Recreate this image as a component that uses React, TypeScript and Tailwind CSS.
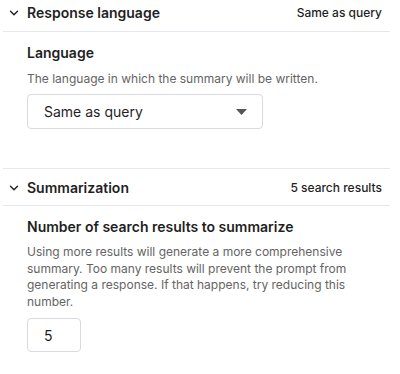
import { ChevronDown } from "lucide-react";

function SectionHeader({ title, value, className }: { title: string; value: string; className: string }) {
  return (
    <div className={`flex items-center justify-between border-b border-[#e6e6ee] pl-[4px] pr-[8px] ${className}`}>
      <div className="flex items-center gap-[6px]">
        <ChevronDown className="w-[14px] h-[14px] text-[#1f1f1f]" strokeWidth={2.4} />
        <span className="text-[14px] font-semibold text-[#1f1f1f]">{title}</span>
      </div>
      <span className="text-[12px] font-medium text-[#1f1f1f]">{value}</span>
    </div>
  );
}

export default function App() {
  return (
    <div className="w-[400px] h-[374px] bg-white overflow-hidden pl-[3px] pr-[10px] font-['Inter',sans-serif]">
      <SectionHeader title="Response language" value="Same as query" className="h-[32px] pb-[6px]" />

      <div className="pl-[24px] pt-[11px] pb-[39px]">
        <h3 className="text-[14px] font-semibold text-[#1f1f1f] leading-[20px]">Language</h3>
        <p className="mt-[7px] text-[12px] text-[#646464] leading-[18px]">
          The language in which the summary will be written.
        </p>
        <div className="mt-[6px] w-[236px] h-[35px] border border-[#d9d9e0] rounded-[4px] flex items-center justify-between pl-[16px] pr-[15px]">
          <span className="text-[14px] text-[#1f1f1f]">Same as query</span>
          <svg width="11" height="6" viewBox="0 0 11 6">
            <path d="M0 0 H11 L5.5 6 Z" fill="#555555" />
          </svg>
        </div>
      </div>

      <div className="border-t border-[#e6e6ee]">
        <SectionHeader title="Summarization" value="5 search results" className="h-[37px] pt-[1px]" />
      </div>

      <div className="pl-[24px] pt-[11px]">
        <h3 className="text-[14px] font-semibold text-[#1f1f1f] leading-[20px]">
          Number of search results to summarize
        </h3>
        <p className="mt-[7px] text-[12px] text-[#646464] leading-[16.5px] w-[340px]">
          Using more results will generate a more comprehensive summary. Too many results will prevent the prompt from generating a response. If that happens, try reducing this number.
        </p>
        <div className="mt-[8px] w-[54px] h-[34px] border border-[#d9d9e0] rounded-[4px] flex items-center pl-[16px]">
          <span className="text-[14px] text-[#1f1f1f]">5</span>
        </div>
      </div>
    </div>
  );
}
